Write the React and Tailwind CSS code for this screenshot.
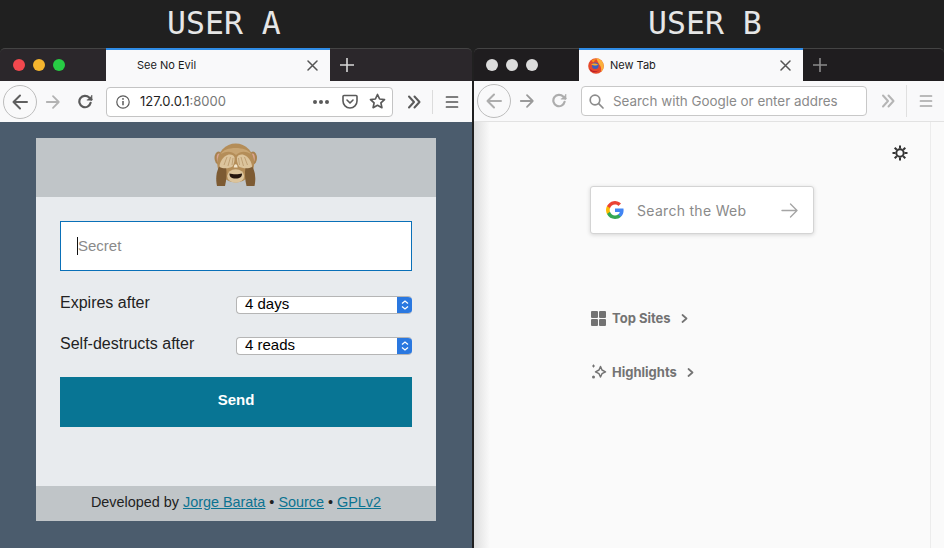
import React from "react";

const ui = "font-['Inter',sans-serif]";
const helv = "font-['Liberation_Sans',Arial,sans-serif]";

const Icon = ({ className = "", size = 18, box = "0 0 18 18", children, stroke = "currentColor", width = 2 }) => (
  <svg width={size} height={size} viewBox={box} fill="none" stroke={stroke} strokeWidth={width} strokeLinecap="round" strokeLinejoin="round" className={`shrink-0 ${className}`}>
    {children}
  </svg>
);

const BackIcon = ({ tone }) => (
  <div className="w-[34px] h-[34px] rounded-full border border-[#bdbdbd] flex items-center justify-center shrink-0">
    <Icon className={tone}><path d="M16 9H2.5M9 2.5 2.5 9 9 15.5" /></Icon>
  </div>
);

const ForwardIcon = ({ tone }) => (
  <Icon size={16} box="0 0 18 18" className={tone}><path d="M2 9h13.5M9 2.5 15.5 9 9 15.5" /></Icon>
);

const ReloadIcon = ({ tone }) => (
  <Icon size={16} box="0 0 16 16" width={2.2} className={tone}>
    <path d="M13.6 8.8A5.7 5.7 0 1 1 12.2 3.6L14.5 5.6" />
    <path d="M14.8 1.4v4.6h-4.6" fill="currentColor" strokeWidth={1} />
  </Icon>
);

const Chevrons = ({ tone }) => (
  <Icon size={14} box="0 0 14 14" className={tone}><path d="M2 1.5 7 7l-5 5.5M7.5 1.5l5 5.5-5 5.5" /></Icon>
);

const Hamburger = ({ tone }) => (
  <Icon size={14} box="0 0 14 14" width={1.7} className={tone}><path d="M1.500 2h11M1.500 7h11M1.500 12h11" /></Icon>
);

const CloseX = () => (
  <Icon size={11} box="0 0 11 11" width={1.5} className="text-[#555]"><path d="M1 1l9 9M10 1l-9 9" /></Icon>
);

const Plus = ({ tone }) => (
  <Icon size={14} box="0 0 14 14" width={1.6} className={tone}><path d="M7 0v14M0 7h14" /></Icon>
);

const Firefox = () => (
  <svg width="16" height="16" viewBox="0 0 16 16" className="shrink-0">
    <circle cx="8" cy="8" r="7.8" fill="#e5482a" />
    <path d="M8 .2A7.800 7.800 0 0 1 15.800 8c0 2.200-1 4.500-3 6 1-2.600.2-5.600-1.500-7.400C10.300 4.300 9 2.500 8 .2Z" fill="#fbb03b" />
    <path d="M3.500 2.500C5 1.200 7 1 8.500 1.500 7 2 6.200 3 6 4.200 5 4.300 4 3.600 3.500 2.500Z" fill="#f7931e" />
    <circle cx="7.300" cy="7.800" r="3.300" fill="#3b5fc0" />
    <path d="M3 6.300c1.500-1 5-1.200 7 .3-.8 1-2.400 1.100-3.800.8-1.300-.3-2.400-.5-3.200-1.100Z" fill="#f9a825" />
    <path d="M2.500 11c1.800 2.200 5.500 3 8.500 1.300-2.600 2.700-7 2.600-9-.2Z" fill="#b71c2c" />
  </svg>
);

const GoogleG = () => (
  <svg width="18" height="18" viewBox="0 0 18 18" className="shrink-0">
    <path d="M17.600 9.200c0-.6-.1-1.300-.2-1.800H9v3.500h4.800a4.100 4.100 0 0 1-1.800 2.700v2.200h2.900c1.700-1.600 2.700-3.900 2.700-6.600Z" fill="#4285f4" />
    <path d="M9 18c2.400 0 4.500-.8 5.900-2.200L12 13.600c-.8.500-1.800.9-3 .9-2.300 0-4.300-1.600-5-3.700H1v2.300A9 9 0 0 0 9 18Z" fill="#34a853" />
    <path d="M4 10.700a5.300 5.300 0 0 1 0-3.400V5H1a9 9 0 0 0 0 8l3-2.300Z" fill="#fbbc05" />
    <path d="M9 3.600c1.300 0 2.500.5 3.400 1.300L15 2.400A9 9 0 0 0 1 5l3 2.300c.7-2.100 2.700-3.700 5-3.700Z" fill="#ea4335" />
  </svg>
);

// see-no-evil monkey, the sandbox has no emoji font
const Monkey = () => (
  <svg width="44" height="45" viewBox="26 9 44 45" className="shrink-0 -mt-[4px]">
    <ellipse cx="30.500" cy="24" rx="4" ry="6.500" fill="#a8824f" />
    <ellipse cx="31" cy="24" rx="2.300" ry="4.500" fill="#dba592" />
    <ellipse cx="65" cy="24" rx="4" ry="6.500" fill="#a8824f" />
    <ellipse cx="64.500" cy="24" rx="2.300" ry="4.500" fill="#dba592" />
    <ellipse cx="47.700" cy="29" rx="18.500" ry="19.500" fill="#b48d58" />
    <path d="M33 20c3-8 26-8 30 0-6-3-10-3-15 1-5-4-9-4-15-1Z" fill="#c8a573" />
    <path d="M29 52c-1.500-7-1-14 2.500-20l6.500 1c1 6 .5 13-1 19Z" fill="#7d5b33" />
    <path d="M66.500 52c1.500-7 1-14-2.500-20l-6.500 1c-1 6-.5 13 1 19Z" fill="#7d5b33" />
    <path d="M31.500 33c0-5 3.500-10.500 8-12 3-1 6.500 0 7 2.500.4 2.500-.5 6.500-2 9-3 2-9.500 2.500-13 .5Z" fill="#dcc49c" />
    <path d="M64 33c0-5-3.500-10.500-8-12-3-1-6.500 0-7 2.500-.4 2.500.5 6.500 2 9 3 2 9.500 2.500 13 .5Z" fill="#dcc49c" />
    <path d="M36 31l3-8M40 32l2.500-9M44 31l1-7M59.500 31l-3-8M55.500 32 53 23M51.500 31l-1-7" stroke="#b8976a" strokeWidth=".8" />
    <ellipse cx="47.700" cy="42" rx="8.500" ry="6.800" fill="#dcc49c" />
    <path d="M41.500 39.500c3 1 9.500 1 12.500 0 .3 3-2 5-6.300 5s-6.500-2-6.200-5Z" fill="#24150e" />
    <path d="M46.300 31c1-1 1.900-1 2.800 0l.6 2.400h-4Z" fill="#f3e6cc" />
  </svg>
);

const Gear = () => (
  <svg width="16" height="16" viewBox="0 0 16 16" fill="none" stroke="#333" className="shrink-0">
    <circle cx="8" cy="8" r="3.700" strokeWidth="2" />
    <path d="M8 .5v3M8 12.500v3M.5 8h3M12.500 8h3M2.700 2.700l2.100 2.100M11.200 11.200l2.100 2.100M13.300 2.700l-2.100 2.100M4.800 11.200l-2.100 2.100" strokeWidth="2" />
  </svg>
);

const Sparkle = () => (
  <svg width="16" height="16" viewBox="0 0 16 16" fill="none" stroke="#737373" className="shrink-0">
    <path d="M9.500 2.500 11 6l3.500 1.800L11 9.700 9.500 13 8 9.700 4.500 7.800 8 6Z" strokeWidth="1.500" strokeLinejoin="round" />
    <path d="M2.500.5v3M1 2h3" strokeWidth="1" />
    <circle cx="2.500" cy="13" r="1.500" fill="#737373" stroke="none" />
  </svg>
);

const Select = ({ value }) => (
  <div className="w-[176px] h-[18px] flex rounded-[4px] bg-white border border-[#b5b5b5] border-r-0 overflow-hidden">
    <span className={`flex-1 pl-2 text-[15px] leading-[14px] text-black ${helv}`}>{value}</span>
    <div className="w-[15px] bg-[#2a78e0] flex items-center justify-center">
      <svg width="8" height="12" viewBox="0 0 8 12" fill="none" stroke="#fff" strokeWidth="1.300"><path d="M1 4.500 4 2l3 2.500M1 7.500 4 10l3-2.500" /></svg>
    </div>
  </div>
);

const FormRow = ({ label, value, className = "" }) => (
  <div className={`flex items-start justify-between ${className}`}>
    <span className={`text-[16px] leading-[18px] text-[#222] ${helv}`}>{label}</span>
    <div className="mt-[2px]"><Select value={value} /></div>
  </div>
);

const TabStrip = ({ stripClass, dotClasses, tabOffset, favicon, title, titleOffset, plusTone }) => (
  <div className={`h-[33px] flex rounded-t-[5px] border-t border-[#444] ${stripClass}`}>
    <div className={`flex items-center gap-2 ${tabOffset}`}>
      {dotClasses.map((dot, i) => (
        <span key={i} className={`w-3 h-3 rounded-full ${dot}`} />
      ))}
    </div>
    <div className="w-[224px] -mt-px bg-[#f9f9fa] border-t-2 border-[#2f8ce6] flex items-center">
      <div className={`flex-1 flex items-center gap-[6px] ${titleOffset}`}>
        {favicon}
        <span className={`text-[11px] text-[#1a1a1a] ${ui}`}>{title}</span>
      </div>
      <div className="pr-[12px]"><CloseX /></div>
    </div>
    <div className="ml-[10px] flex items-center"><Plus tone={plusTone} /></div>
  </div>
);

const LeftWindow = () => (
  <div className="w-[472px] flex flex-col shrink-0">
    <TabStrip
      stripClass="bg-[#2b272b]"
      dotClasses={["bg-[#f2484e]", "bg-[#f5b52e]", "bg-[#27cc44]"]}
      tabOffset="w-[106px] pl-[13px]"
      title="See No Evil"
      titleOffset="pl-[31px]"
      plusTone="text-[#d8d8d8]"
    />
    <div className="h-[41px] bg-[#f9f9fa] flex items-center pl-[3px] text-[#5a5a5a]">
      <BackIcon tone="text-[#5f5f5f]" />
      <div className="ml-[8px]"><ForwardIcon tone="text-[#b3b3b3]" /></div>
      <div className="ml-[16px]"><ReloadIcon tone="text-[#5a5a5a]" /></div>
      <div className="ml-[13px] w-[287px] h-[30px] bg-white border border-[#c4c4c4] rounded-[4px] flex items-center pl-[9px] pr-[6px]">
        <svg width="14" height="14" viewBox="0 0 14 14" fill="none" stroke="#5a5a5a" className="shrink-0">
          <circle cx="7" cy="7" r="6.200" strokeWidth="1.200" />
          <path d="M7 6v4.200" strokeWidth="1.500" />
          <circle cx="7" cy="3.900" r=".9" fill="#5a5a5a" stroke="none" />
        </svg>
        <span className={`ml-[10px] mt-[1px] text-[13px] text-[#1f1f1f] ${ui}`}>127.0.0.1<span className="text-[#777]">:8000</span></span>
        <div className="ml-auto flex items-center">
          <span className="flex gap-[2px]">
            <i className="w-1 h-1 rounded-full bg-[#5a5a5a]" />
            <i className="w-1 h-1 rounded-full bg-[#5a5a5a]" />
            <i className="w-1 h-1 rounded-full bg-[#5a5a5a]" />
          </span>
          <Icon size={16} box="0 0 16 16" width={1.6} className="ml-[13px]">
            <path d="M2 1.500h12c.6 0 1 .4 1 1V7c0 3.800-3 7-7 7s-7-3.200-7-7V2.500c0-.6.4-1 1-1Z" />
            <path d="M5 6l3 3 3-3" />
          </Icon>
          <Icon size={17} box="0 0 17 17" width={1.700} className="ml-[11px]">
            <path d="M8.500 1.500 10.600 6l4.900.6-3.600 3.300 1 4.800-4.400-2.400-4.400 2.400 1-4.800L1.500 6.600 6.400 6Z" />
          </Icon>
        </div>
      </div>
      <div className="ml-[14px]"><Chevrons tone="text-[#5a5a5a]" /></div>
      <div className="ml-[11px] w-px h-[24px] bg-[#dcdcdc]" />
      <div className="ml-[12px]"><Hamburger tone="text-[#555]" /></div>
    </div>
    <div className="flex-1 bg-[#4b5c6d] pt-[16px] pl-[36px]">
      <div className="w-[400px] h-[383px] flex flex-col">
        <div className="h-[59px] bg-[#c0c5c8] flex items-center justify-center"><Monkey /></div>
        <div className="flex-1 bg-[#e8ebee] pt-[24px] px-[24px]">
          <div className="h-[50px] bg-white border border-[#0a70b8] flex items-center pl-[16px]">
            <span className="w-px h-[18px] bg-[#111]" />
            <span className={`text-[15px] text-[#8a8a8a] ${helv}`}>Secret</span>
          </div>
          <FormRow label="Expires after" value="4 days" className="mt-[23px]" />
          <FormRow label="Self-destructs after" value="4 reads" className="mt-[21px]" />
          <button className={`mt-[22px] w-full h-[50px] pb-[3px] bg-[#087594] text-white text-[15px] font-bold ${helv}`}>Send</button>
        </div>
        <div className={`h-[35px] pb-[2px] bg-[#c0c5c8] flex items-center justify-center text-[14.400px] text-[#222] ${helv}`}>
          <span>
            Developed by <a className="text-[#0b7391] underline">Jorge Barata</a> • <a className="text-[#0b7391] underline">Source</a> • <a className="text-[#0b7391] underline">GPLv2</a>
          </span>
        </div>
      </div>
    </div>
  </div>
);

const RightWindow = () => (
  <div className="w-[470px] ml-[2px] flex flex-col shrink-0">
    <TabStrip
      stripClass="bg-[#1f1d1f]"
      dotClasses={["bg-[#dcdcdc]", "bg-[#dcdcdc]", "bg-[#dcdcdc]"]}
      tabOffset="w-[105px] pl-[12px]"
      favicon={<Firefox />}
      title="New Tab"
      titleOffset="pl-[9px]"
      plusTone="text-[#8a8a8a]"
    />
    <div className="h-[41px] bg-[#f9f9fa] border-b border-[#e2e2e2] flex items-center pl-[3px]">
      <BackIcon tone="text-[#adadad]" />
      <div className="ml-[8px]"><ForwardIcon tone="text-[#9a9a9a]" /></div>
      <div className="ml-[16px]"><ReloadIcon tone="text-[#adadad]" /></div>
      <div className="ml-[14px] w-[286px] h-[30px] bg-white border border-[#c8c8c8] rounded-[4px] flex items-center pl-[7px]">
        <Icon size={15} box="0 0 15 15" width={1.700} className="text-[#8c8c8c]">
          <circle cx="6" cy="6" r="4.800" /><path d="M9.700 9.700 14 14" />
        </Icon>
        <span className={`ml-[9px] mt-[1px] whitespace-nowrap text-[13.400px] text-[#8a8a8a] ${ui}`}>Search with Google or enter addres</span>
      </div>
      <div className="ml-[14px]"><Chevrons tone="text-[#b5b5b5]" /></div>
      <div className="ml-[11px] w-px h-[32px] bg-[#e0e0e0]" />
      <div className="ml-[12px]"><Hamburger tone="text-[#a5a5a5]" /></div>
    </div>
    <div className="flex-1 flex">
      <div className={`flex-1 flex flex-col bg-[linear-gradient(90deg,#dedede,#fafafa_16px)] ${ui}`}>
        <div className="flex justify-end pr-[22px] pt-[23px]"><Gear /></div>
        <div className="ml-[116px] mt-[25px] w-[224px] h-[48px] bg-white rounded-[3px] border border-[#d4d4d4] shadow-[0_1px_4px_rgba(0,0,0,0.15)] flex items-center pl-[15px] pr-[15px]">
          <GoogleG />
          <span className="ml-[13px] text-[14px] tracking-[0.3px] text-[#8a8a8a]">Search the Web</span>
          <Icon size={17} box="0 0 17 17" width={1.400} className="ml-auto text-[#a5a5a5]"><path d="M1 8.500h15M9.500 2l6.500 6.500L9.500 15" /></Icon>
        </div>
        <div className="ml-[117px] mt-[75px] flex items-center text-[#737373]">
          <span className="grid grid-cols-2 gap-[1px] w-[15px] h-[15px]">
            <i className="bg-[#737373] rounded-[1px]" /><i className="bg-[#737373] rounded-[1px]" /><i className="bg-[#737373] rounded-[1px]" /><i className="bg-[#737373] rounded-[1px]" />
          </span>
          <span className="ml-[6px] text-[13px] font-bold">Top Sites</span>
          <Icon size={9} box="0 0 9 9" width={1.700} className="ml-[9px]"><path d="M2.500 1 6.500 4.500 2.500 8" /></Icon>
        </div>
        <div className="ml-[117px] mt-[34px] flex items-center text-[#737373]">
          <Sparkle />
          <span className="ml-[5px] text-[13px] font-bold">Highlights</span>
          <Icon size={9} box="0 0 9 9" width={1.700} className="ml-[9px]"><path d="M2.500 1 6.500 4.500 2.500 8" /></Icon>
        </div>
      </div>
      <div className="w-[14px] bg-[#fafafa] border-l border-[#ececec]" />
    </div>
  </div>
);

export default function App() {
  return (
    <div className="w-[944px] h-[548px] overflow-hidden bg-[#202020] flex flex-col">
      <div className="h-[48px] shrink-0 flex items-center pl-[167px] text-[#e6e6e6] text-[31.500px] font-['DejaVu_Sans_Mono',monospace]">
        <span className="w-[481px]">USER A</span>
        <span>USER B</span>
      </div>
      <div className="flex-1 flex min-h-0">
        <LeftWindow />
        <RightWindow />
      </div>
    </div>
  );
}
